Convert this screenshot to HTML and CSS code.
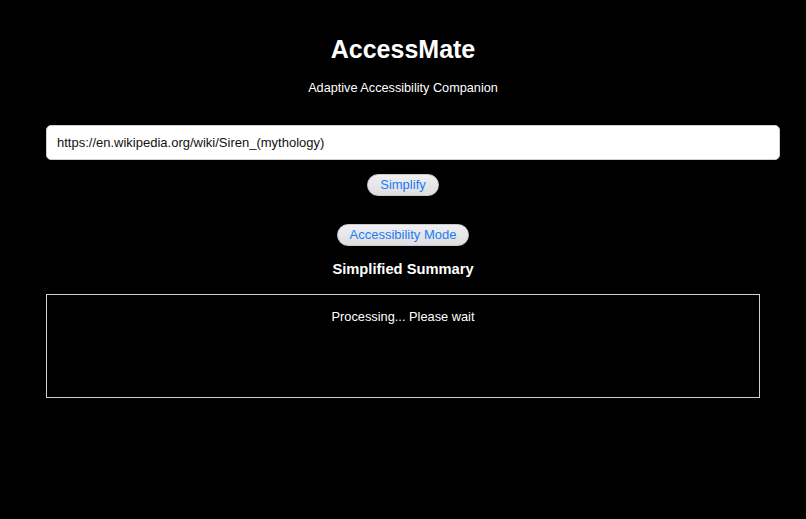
FILE: index.html
```html
<!DOCTYPE html>
<html lang="en">
<head>
    <meta charset="UTF-8">
    <meta name="viewport" content="width=device-width, initial-scale=1.0">
    <title>AccessMate</title>
    <link rel="stylesheet" href="styles.css">
</head>
<body>
    <div class="container">
        <h1>AccessMate</h1>
        <p class="subtitle">Adaptive Accessibility Companion</p>
        <input type="text" id="url-input" value="https://en.wikipedia.org/wiki/Siren_(mythology)"/>
        <button id="simplify-button" class="simplify">Simplify</button>
        <button id="mode-button" class="mode">Accessibility Mode</button>
        <h3>Simplified Summary</h3>
        <div id="summary" class="summary">Processing... Please wait</div>
    </div>
</body>
</html>
```

FILE: styles.css
```css
* {
    padding: 0;
    margin: 0;
    box-sizing: border-box;
    font-family: "Liberation Sans", Arial, Helvetica, sans-serif;
}

body {
    background: #000;
    color: #fff;
    height: 519px;
}

.container {
    width: 714px;
    margin: 0 auto;
    display: flex;
    flex-direction: column;
    align-items: center;
    text-align: center;
}

h1 {
    font-size: 25px;
    line-height: 28px;
    margin-top: 35px;
}

.subtitle {
    font-size: 12.7px;
    line-height: 16px;
    margin-top: 17px;
}

#url-input {
    align-self: flex-start;
    width: 734px;
    height: 35px;
    margin-top: 29px;
    padding: 0 10px;
    font-size: 13px;
    color: #111;
    background: #fff;
    border: 1px solid #cfcfcf;
    border-radius: 5px;
    outline: none;
}

button {
    font-size: 13px;
    line-height: 16px;
    padding: 2px 12px;
    color: #1a7cf5;
    background: linear-gradient(#f0f0f2, #dedee2);
    border: 1px solid #c9c9ce;
    border-radius: 11px;
    cursor: pointer;
}

.simplify {
    margin-top: 14px;
}

.mode {
    margin-top: 28px;
}

h3 {
    font-size: 14.7px;
    line-height: 18px;
    margin-top: 14px;
}

.summary {
    width: 714px;
    height: 104px;
    margin-top: 16px;
    padding-top: 14px;
    font-size: 12.8px;
    line-height: 16px;
    border: 1px solid #cfcfcf;
}
```
